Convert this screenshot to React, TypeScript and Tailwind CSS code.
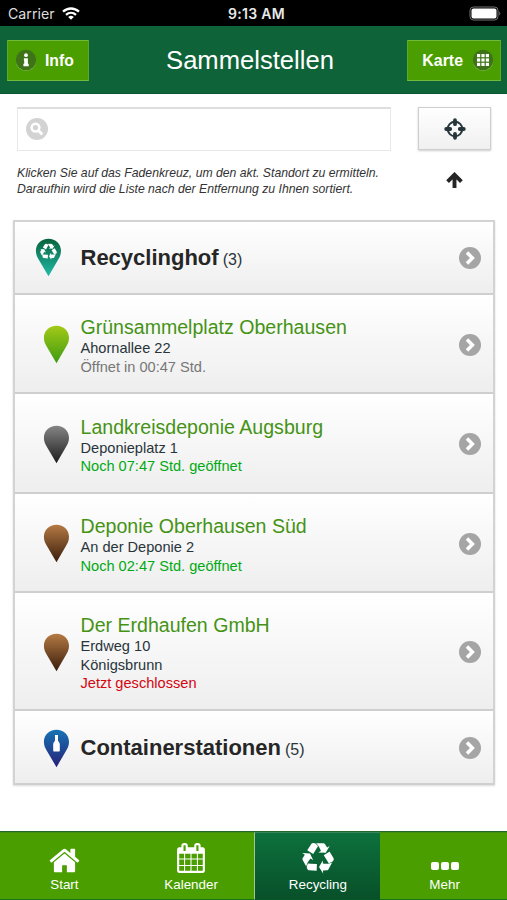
import type { ReactNode } from "react";

type PinKind = "recycling" | "green" | "grey" | "brown" | "bottle";

const pinColors: Record<PinKind, [string, string]> = {
  recycling: ["#08633c", "#20baa8"],
  green: ["#a4c916", "#3d9b12"],
  grey: ["#858585", "#1d1d1d"],
  brown: ["#b57a43", "#3a1d0d"],
  bottle: ["#1673b4", "#272178"],
};

const places: { name: string; lines: string[]; status: string; statusClass: string; pin: PinKind; height: string }[] = [
  { name: "Grünsammelplatz Oberhausen", lines: ["Ahornallee 22"], status: "Öffnet in 00:47 Std.", statusClass: "text-[#777]", pin: "green", height: "h-[99px]" },
  { name: "Landkreisdeponie Augsburg", lines: ["Deponieplatz 1"], status: "Noch 07:47 Std. geöffnet", statusClass: "text-[#00aa14]", pin: "grey", height: "h-[100px]" },
  { name: "Deponie Oberhausen Süd", lines: ["An der Deponie 2"], status: "Noch 02:47 Std. geöffnet", statusClass: "text-[#00aa14]", pin: "brown", height: "h-[99px]" },
  { name: "Der Erdhaufen GmbH", lines: ["Erdweg 10", "Königsbrunn"], status: "Jetzt geschlossen", statusClass: "text-[#d40510]", pin: "brown", height: "h-[118px]" },
];

function RecycleIcon({ size, x, y, className }: { size: number; x?: number; y?: number; className?: string }) {
  return (
    <svg x={x} y={y} width={size} height={size} viewBox="0 0 1792 1792" fill="#fff" className={className}>
      <path d="M836 1169l-15 368-2 22-420-29q-36-3-67-31.5t-47-65.5q-11-27-14.5-55t4-65 12-55 21.5-64 19-53q78 12 509 28zm-387-586l180 379-147-92q-63 72-111.5 144.5t-72.5 125-39.5 94.5-18.5 63l-4 21-190-357q-17-26-18-56t6-47l8-18q35-63 114-188l-140-86zm1231 517l-188 359q-12 29-36.5 46.5t-43.5 20.5l-18 4q-71 7-219 12l8 164-230-367 211-362 7 173q170 16 283 5t170-33zm-785-924q-47 63-265 435l-317-187-19-12 225-356q20-31 60-45t80-10q24 2 48.5 12t42 21 41.5 33 36 34.5 36 39.5 32 35zm655 307l212 363q18 37 12.5 76t-27.5 74q-13 20-33 37t-38 28-48.5 22-47 16-51.5 14-46 12q-34-72-265-436l313-195zm-143-226l142-83-220 373-419-20 151-86q-34-89-75-166t-75.5-123.5-64.5-80-47-46.5l-17-13 405 1q31-3 58 10.5t39 28.5l11 15q39 61 112 190z" />
    </svg>
  );
}

function Pin({ kind, id }: { kind: PinKind; id: string }) {
  const [top, bottom] = pinColors[kind];
  return (
    <svg width="27" height="39" viewBox="0 0 27 39" className="shrink-0">
      <defs>
        <linearGradient id={id} x1="0" y1="0" x2="0" y2="1">
          <stop offset="0" stopColor={top} />
          <stop offset="1" stopColor={bottom} />
        </linearGradient>
      </defs>
      <path d="M13.5 .7C6.3 .7 .9 6 .9 12.8c0 4 1.5 6.5 3.2 9.5l9.4 15.9 9.3-15.9c1.8-3 3.2-5.5 3.2-9.5C26 6 20.7.7 13.5.7z" fill={`url(#${id})`} />
      {kind === "recycling" && <RecycleIcon x={5} y={5.6} size={17} />}
      {kind === "bottle" && (
        <path d="M12 6h3v5.2c0 1.6 1.8 1.8 1.8 4v6.3c0 .7-.4 1-1 1h-4.6c-.6 0-1-.3-1-1v-6.3c0-2.2 1.8-2.4 1.8-4z" fill="#fff" />
      )}
    </svg>
  );
}

function Chevron() {
  return (
    <svg width="22" height="22" viewBox="0 0 22 22" className="shrink-0">
      <circle cx="11" cy="11" r="11" fill="#a5a5a5" />
      <path d="M8 5.6l5.4 5.4L8 16.4" fill="none" stroke="#fff" strokeWidth="3.5" />
    </svg>
  );
}

function Row({ height, pin, id, inset = "pt-[2px] pl-[28px]", children }: { height: string; pin: PinKind; id: string; inset?: string; children: ReactNode }) {
  return (
    <li className={`flex items-center border-b-2 border-[#cfcfcf] bg-linear-to-b from-white to-[#eeeeee] pr-[12px] ${inset} ${height}`}>
      <Pin kind={pin} id={id} />
      <div className="ml-auto w-[378.5px] shrink-0 pt-[2px]">{children}</div>
      <Chevron />
    </li>
  );
}

function GroupTitle({ name, count }: { name: string; count: number }) {
  return (
    <div className="flex items-baseline gap-[4px] leading-[28px]">
      <h2 className="text-[22px] font-bold text-[#262626]">{name}</h2>
      <span className="text-[16px]">({count})</span>
    </div>
  );
}

function StatusBar() {
  return (
    <div className="grid h-[26px] grid-cols-3 items-center bg-black pt-[1px] pr-[6px] pl-2 text-white">
      <div className="flex items-center gap-[7px] font-['Inter',sans-serif] text-[14.2px] text-[#ddd]">
        Carrier
        <svg width="18" height="13" viewBox="0 0 18 13" fill="none" stroke="#fff" strokeWidth="2.3">
          <path d="M1 4.7c4.6-4.3 11.4-4.3 16 0M4 7.9c2.9-2.7 7.1-2.7 10 0" />
          <path d="M6.2 10a4.2 4.2 0 0 1 5.6 0L9 12.8z" fill="#fff" stroke="none" />
        </svg>
      </div>
      <div className="pl-[4px] text-center font-['Inter',sans-serif] text-[14px] font-semibold tracking-[0.3px] text-[#e8e8e8]">9:13 AM</div>
      <svg width="32" height="15" viewBox="0 0 32 15" className="justify-self-end">
        <rect x="1" y="1" width="28" height="13" rx="3.5" fill="none" stroke="#777" />
        <rect x="2.5" y="2.5" width="25" height="10" rx="2" fill="#fff" />
        <path d="M30.3 5.5c1.3.5 1.3 3.5 0 4z" fill="#777" />
      </svg>
    </div>
  );
}

function Header() {
  return (
    <header className="flex h-[68px] items-center justify-between border-b border-[#08552f] bg-[#0e6338] pt-[1px] pr-[6px] pl-[7px] text-white">
      <button className="flex h-[41px] w-[82px] items-center gap-[8px] border border-t-[#71b83b] border-r-[#5da826] border-b-[#71b83b] border-l-[#5da826] bg-[#4a9e00] pl-[7px] text-[15.7px] font-bold">
        <svg width="22" height="22" viewBox="0 0 22 22">
          <circle cx="11" cy="11.7" r="10.3" fill="#83bd53" />
          <circle cx="11" cy="11" r="10.3" fill="#3e7417" />
          <circle cx="11" cy="6.2" r="1.9" fill="#fff" />
          <path d="M8.9 9.2h4v5.6h.8v2.4H8.4v-2.4h.8v-3.3h-.3z" fill="#fff" />
        </svg>
        <span className="pt-[2px]">Info</span>
      </button>
      <h1 className="pt-[1px] pl-[4px] text-[25.6px] font-normal">Sammelstellen</h1>
      <button className="flex h-[41px] w-[94px] items-center justify-end gap-[9px] border border-t-[#71b83b] border-r-[#5da826] border-b-[#71b83b] border-l-[#5da826] bg-[#4a9e00] pr-[6px] text-[15.9px] font-bold">
        <span className="pt-[2px]">Karte</span>
        <svg width="22" height="22" viewBox="0 0 22 22">
          <circle cx="11" cy="11.7" r="10.3" fill="#83bd53" />
          <circle cx="11" cy="11" r="10.3" fill="#3e7417" />
          {[5, 9.4, 13.8].map((y) => [5, 9.4, 13.8].map((x) => <rect key={`${x}-${y}`} x={x} y={y} width="3.2" height="3.2" fill="#fff" />))}
        </svg>
      </button>
    </header>
  );
}

function Tab({ label, active = false, children }: { label: string; active?: boolean; children: ReactNode }) {
  return (
    <button
      className={`flex flex-1 flex-col items-center border-t border-b text-[13.4px] text-white ${
        active
          ? "border-l border-t-[#39845b] border-b-[#07572b] border-l-[#9fcb86] bg-linear-to-b from-[#0d713d] to-[#085029] pl-[1px]"
          : "border-t-[#438e12] border-b-[#187414] bg-[#4a9e00] pl-[2px]"
      }`}
    >
      <span className="flex h-[44px] items-end">{children}</span>
      <span className="leading-[16px]">{label}</span>
    </button>
  );
}

export default function App() {
  return (
    <div className="flex h-[900px] w-[507px] flex-col bg-white font-['Liberation_Sans',Arial,sans-serif] text-[#29343a]">
      <StatusBar />
      <Header />

      <div className="flex justify-between pt-[13px] pr-[16px] pl-[17px]">
        <div className="flex h-[44px] w-[374px] items-center border border-t-2 border-[#e8e8e8] border-t-[#dedede] pb-[2px] pl-[8px]">
          <svg width="22" height="22" viewBox="0 0 22 22">
            <circle cx="11" cy="11" r="11" fill="#d3d3d3" />
            <circle cx="9.5" cy="9.6" r="3.9" fill="none" stroke="#fff" strokeWidth="2.5" />
            <path d="M12.3 12.5l4 4" stroke="#fff" strokeWidth="3" />
          </svg>
        </div>
        <button className="flex h-[43px] w-[73px] items-center justify-center border border-[#cecece] bg-linear-to-b from-white to-[#f0f0f0] pt-[1px] shadow-[0_1px_2px_rgba(0,0,0,0.2)]">
          <svg width="22" height="22" viewBox="0 0 22 22" fill="none" stroke="#26363a">
            <circle cx="11" cy="11" r="7.3" strokeWidth="2" />
            <path d="M11 2.2v4M11 15.8v4M2.2 11h4M15.8 11h4" strokeWidth="3.8" strokeLinecap="round" />
          </svg>
        </button>
      </div>

      <div className="flex justify-between pt-[15px] pr-[44px] pl-[17px]">
        <p className="text-[12.22px] leading-[15.5px] whitespace-nowrap text-[#333] italic">
          Klicken Sie auf das Fadenkreuz, um den akt. Standort zu ermitteln.
          <br />
          Daraufhin wird die Liste nach der Entfernung zu Ihnen sortiert.
        </p>
        <svg width="17" height="17" viewBox="0 0 17 17" className="mt-[6px]" fill="none" stroke="#252525" strokeWidth="3.9">
          <path d="M8.5 16V3M1.6 9.6l6.9-6.9 6.9 6.9" />
        </svg>
      </div>

      <ul className="mt-[23px] mr-[12px] ml-[13px] border-2 border-b-0 border-[#d3d3d3] shadow-[0_1px_2px_rgba(0,0,0,0.15)]">
        <Row height="h-[73px]" pin="recycling" id="pin-hof" inset="pl-[20px]">
          <GroupTitle name="Recyclinghof" count={3} />
        </Row>
        {places.map((p, i) => (
          <Row key={p.name} height={p.height} pin={p.pin} id={`pin-${i}`}>
            <h3 className="text-[19.57px] leading-[24px] text-[#459315]">{p.name}</h3>
            <div className="text-[14.6px] leading-[18.5px]">
              {p.lines.map((line) => (
                <p key={line}>{line}</p>
              ))}
              <p className={p.statusClass}>{p.status}</p>
            </div>
          </Row>
        ))}
        <Row height="h-[74px]" pin="bottle" id="pin-container">
          <GroupTitle name="Containerstationen" count={5} />
        </Row>
      </ul>

      <nav className="mt-auto flex h-[69px] border-t border-[#23662c]">
        <Tab label="Start">
          <svg width="33" height="33" viewBox="0 0 1792 1792" fill="#fff">
            <path d="M1472 992v480q0 26-19 45t-45 19h-384v-384h-256v384h-384q-26 0-45-19t-19-45v-480q0-1 .5-3t.5-3l575-474 575 474q1 2 1 6zm223-69l-62 74q-8 9-21 11h-3q-13 0-21-7l-692-577-692 577q-12 8-24 7-13-2-21-11l-62-74q-8-10-7-23.5t11-21.5l719-599q32-26 76-26t76 26l244 204v-195q0-14 9-23t23-9h192q14 0 23 9t9 23v408l219 182q10 8 11 21.5t-7 23.5z" />
          </svg>
        </Tab>
        <Tab label="Kalender">
          <svg width="30" height="30" viewBox="0 0 1792 1792" fill="#fff" className="mb-[4px]">
            <path d="M192 1664h288v-288h-288v288zm352 0h320v-288h-320v288zm-352-352h288v-320h-288v320zm352 0h320v-320h-320v320zm-352-384h288v-288h-288v288zm736 736h320v-288h-320v288zm-384-736h320v-288h-320v288zm768 736h288v-288h-288v288zm-384-352h320v-320h-320v320zm-352-864v-288q0-13-9.5-22.5t-22.5-9.5h-64q-13 0-22.5 9.5t-9.5 22.5v288q0 13 9.5 22.5t22.5 9.5h64q13 0 22.5-9.5t9.5-22.5zm736 864h288v-320h-288v320zm-384-384h320v-288h-320v288zm384 0h288v-288h-288v288zm32-480v-288q0-13-9.5-22.5t-22.5-9.5h-64q-13 0-22.5 9.5t-9.5 22.5v288q0 13 9.5 22.5t22.5 9.5h64q13 0 22.5-9.5t9.5-22.5zm384-64v1280q0 52-38 90t-90 38h-1408q-52 0-90-38t-38-90v-1280q0-52 38-90t90-38h128v-96q0-66 47-113t113-47h64q66 0 113 47t47 113v96h384v-96q0-66 47-113t113-47h64q66 0 113 47t47 113v96h128q52 0 90 38t38 90z" />
          </svg>
        </Tab>
        <Tab label="Recycling" active>
          <RecycleIcon size={32} className="mb-[2px]" />
        </Tab>
        <Tab label="Mehr">
          <svg width="28" height="8" viewBox="0 0 28 8" fill="#fff" className="mb-[7px]">
            {[0, 10, 20].map((x) => (
              <rect key={x} x={x} width="8" height="8" rx="2" />
            ))}
          </svg>
        </Tab>
      </nav>
    </div>
  );
}
